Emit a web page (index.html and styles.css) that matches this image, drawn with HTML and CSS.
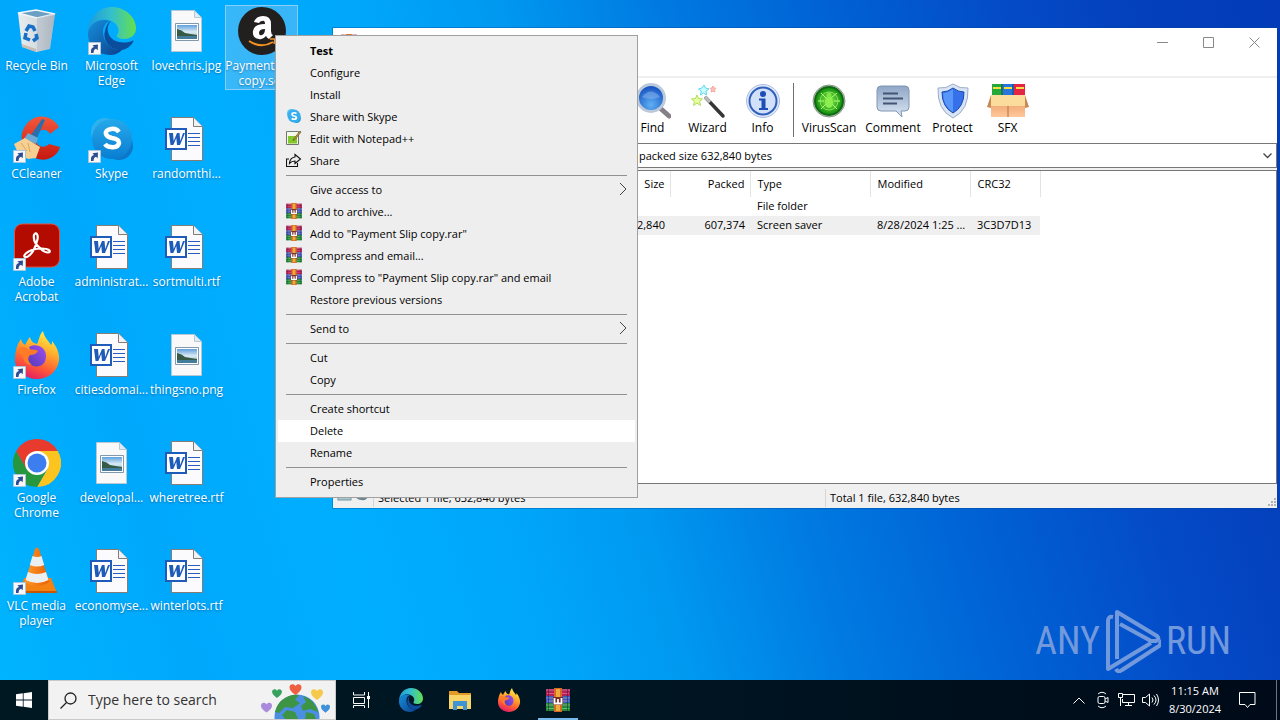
FILE: index.html
```html
<!DOCTYPE html>
<html lang="en">
<head>
<meta charset="utf-8">
<title>Desktop</title>
<link rel="stylesheet" href="styles.css">
</head>
<body>
<svg class="defs" width="0" height="0" aria-hidden="true">
  <defs>
    <linearGradient id="gEdge" x1="0" y1="0" x2="1" y2="0"><stop offset="0" stop-color="#1c9ade"/><stop offset=".5" stop-color="#35c1c8"/><stop offset="1" stop-color="#66e04c"/></linearGradient>
    <linearGradient id="gEdge2" x1="0" y1="0" x2="1" y2="1"><stop offset="0" stop-color="#1690dc"/><stop offset="1" stop-color="#0c3f8c"/></linearGradient>
    <linearGradient id="gBin" x1="0" y1="0" x2="1" y2="0"><stop offset="0" stop-color="#e9edf0"/><stop offset=".6" stop-color="#d3d9de"/><stop offset="1" stop-color="#a3b0bb"/></linearGradient>
    <linearGradient id="gSkype" x1="0" y1="0" x2="0" y2="1"><stop offset="0" stop-color="#25a9ea"/><stop offset="1" stop-color="#0a7ed2"/></linearGradient>
    <linearGradient id="gFox" x1=".7" y1="0" x2=".3" y2="1"><stop offset="0" stop-color="#fff04a"/><stop offset=".35" stop-color="#ffb02c"/><stop offset=".7" stop-color="#ff5a36"/><stop offset="1" stop-color="#e01a6a"/></linearGradient>
    <linearGradient id="gPurple" x1="1" y1="0" x2="0" y2="1"><stop offset="0" stop-color="#a44df0"/><stop offset="1" stop-color="#4b3bb8"/></linearGradient>
    <linearGradient id="gRed" x1="0" y1="0" x2="0" y2="1"><stop offset="0" stop-color="#f4573a"/><stop offset="1" stop-color="#c5180f"/></linearGradient>
    <linearGradient id="gSky" x1="0" y1="0" x2="0" y2="1"><stop offset="0" stop-color="#5f9fdc"/><stop offset=".5" stop-color="#dcecf5"/><stop offset="1" stop-color="#6fa1b9"/></linearGradient>
    <linearGradient id="gCone" x1="0" y1="0" x2="1" y2="0"><stop offset="0" stop-color="#ff9a2a"/><stop offset="1" stop-color="#e85f00"/></linearGradient>
    <radialGradient id="gLens" cx=".5" cy=".75" r=".7"><stop offset="0" stop-color="#5fb0f4"/><stop offset="1" stop-color="#1450c0"/></radialGradient>
    <radialGradient id="gVirus"><stop offset="0" stop-color="#8cf04a"/><stop offset="1" stop-color="#0c8a0c"/></radialGradient>
    <linearGradient id="gSteel" x1="0" y1="0" x2="0" y2="1"><stop offset="0" stop-color="#8fa6c6"/><stop offset="1" stop-color="#dbe7f4"/></linearGradient>
    <linearGradient id="gBox" x1="0" y1="0" x2="0" y2="1"><stop offset="0" stop-color="#e89a60"/><stop offset="1" stop-color="#ffc79a"/></linearGradient>

    <symbol id="shortcut" viewBox="0 0 13 13"><path d="M.5.5h12v12H.5z" fill="#f7f7f9" stroke="#a9c6dc"/><path d="M3 11V8.500Q3.200 5.500 6 5L4.500 3.200 10 2.500 9.700 8.200 8 6.800Q5.500 7.500 5.500 11z" fill="#2c4d91"/></symbol>
    <symbol id="edge" viewBox="0 0 48 48">
      <path d="M0 25C1 10 11 0 24 0s24 10 24 21c0 7-5 11-12 11-5 0-8-2-7-4 3-3 2-11-6-14C13 10 4 15 0 25z" fill="url(#gEdge)"/>
      <path d="M0 25C3 14 14 11 22 14c-4 1-7 5-7 11 0 11 9 19 19 18-3 3-7 5-12 5C9 48-1 38 0 25z" fill="url(#gEdge2)"/>
      <path d="M17 24c-3 10 6 20 17 19 5-1 9-4 11-8 1-1 0-2-1-1-11 4-22 0-24-9-1-4 0-8 3-11-3 1-5 5-6 10z" fill="#0b4c9c"/>
    </symbol>
    <symbol id="fox" viewBox="0 0 48 48">
      <path d="M3 20C4 13 7 10 8 8c1 4 3 5 4 6 2-4 4-7 5-8 1 4 3 6 7 7 2-3 2-9 6-13 1 6 5 9 8 14 1-1 1-2 1-4 5 6 8 13 7 20-2 11-11 18-22 18S2 40 2 29c0-4 0-6 1-9z" fill="url(#gFox)"/>
      <path d="M16 16c6-4 17-1 17 9 0 8-6 12-12 10-6-1-8-6-7-11l5-2z" fill="url(#gPurple)"/>
      <path d="M3 20c4-5 8-5 12-2 4 1 8 0 10 2-2 3-5 4-8 4-3 3-2 7 2 10-5 0-9-4-9-9z" fill="#ff7b27"/>
    </symbol>
    <symbol id="word" viewBox="0 0 40 44">
      <path d="M6.500.5h22l9 9v34h-31z" fill="#fbfbfd" stroke="#857c76"/><path d="M28.500.5v9h9" fill="#eef3fa" stroke="#857c76"/>
      <path d="M23 16.500h12M23 20.500h12M23 24.500h12M23 28.500h12" stroke="#2a5dbd"/>
      <path d="M1 12h20v20H1z" fill="#fff" stroke="#1f5bb8" stroke-width="2"/>
      <path d="M4 16h4l.7 8 3.300-8h2.500l.8 8 2.700-8H20l-5 12h-3l-.7-7-3 7H5.500z" fill="#1f5bb8"/>
    </symbol>
    <symbol id="photo" viewBox="0 0 40 44">
      <path d="M6.500 1.500h23l7 7v34h-30z" fill="#f9f9fa" stroke="#b9c9d4"/><path d="M29.500 1.500v7h7z" fill="#dcebf5" stroke="#b9c9d4"/>
      <path d="M10.500 14.500h23v17h-23z" fill="#fff" stroke="#8199ab"/><path d="M12 16h20v14H12z" fill="url(#gSky)"/>
      <path d="M12 20q5 1 8 4 5 1 12 2v1H12z" fill="#375a46"/><path d="M12 27h20v3H12z" fill="#447c9b"/>
    </symbol>
    <symbol id="rar" viewBox="0 0 24 24">
      <path d="M0 1h24v7H0z" fill="#b32257"/><path d="M0 8h24v7H0z" fill="#4159b8"/><path d="M0 15h24v8H0z" fill="#278a3a"/>
      <path d="M0 2h24M0 10h24M0 17h24" stroke="#fff" stroke-opacity=".35"/>
      <path d="M1 5.500h22" stroke="#e35683"/><path d="M1 13h22" stroke="#8795dc"/><path d="M1 20.500h22" stroke="#52c463"/>
      <path d="M2.500 1v22M21.500 1v22" stroke="#201a44" stroke-opacity=".5"/>
      <path d="M8 0h8v24H8z" fill="#d66a22"/><path d="M10 1h4v22h-4z" fill="#efaa3f"/>
      <path d="M7 9h10v8H7z" fill="#7a2c22"/><path d="M8.500 10v5.500h7V10M12 11v4" fill="none" stroke="#fff" stroke-width="1.800"/>
    </symbol>
    <symbol id="heart" viewBox="0 0 12 11"><path d="M6 11C2 8 0 6 0 3.500 0 0 4-.8 6 2c2-2.800 6-2 6 1.500C12 6 10 8 6 11z"/></symbol>
  </defs>
</svg>

<div class="screen">
  <main class="desktop">
    <div class="icons">
      <button class="item"><svg class="pic" viewBox="0 0 48 48"><path d="M5 6 23 3l19 4-5 35-14 3-14-5z" fill="url(#gBin)"/><path d="M5 6l18-3 19 4-18 4z" fill="#6c9fc4" stroke="#f3f6f8" stroke-width="1.500"/><path d="M24 11v34l13-4 5-34z" fill="#aebac4" opacity=".55"/><path d="M9 37l14 5v3L9 40z" fill="#b5957a" opacity=".5"/><g fill="none" stroke="#1671c6" stroke-width="3.500"><path d="M13 24l3-5 4 1 2 4"/><path d="M23 27l1 4-4 3"/><path d="M17 33l-5-2 1-5"/></g></svg><span>Recycle Bin</span></button>
      <button class="item"><svg class="pic" viewBox="0 0 48 48"><path d="M46 12C38-2 16-4 9 18c-3 15 12 30 26 26 6-2 11-7 12-12L36 29c-5 5-13 3-13-5 1-10 10-12 14-5z" fill="url(#gRed)"/><path d="M29 4l3 1-8 18-6-3z" fill="#2c6eaa"/><path d="M15 18l10 5-2 6-12-5z" fill="#6ba9d5"/><path d="M1 29l11-6 15 9-4 11-8 1-10-6z" fill="#f6cf93"/><path d="M8 28l6 8M15 28l2 9" stroke="#d9a75c"/><use href="#shortcut" y="35" width="13" height="13"/></svg><span>CCleaner</span></button>
      <button class="item"><svg class="pic" viewBox="0 0 48 48"><rect x="1.500" y="1" width="45" height="43" rx="8" fill="#b30b00" stroke="#e7503e"/><path d="M21 12c2-4 5 0 3 6-2 8-6 14-10 16-5 1-3-4 5-7 6-2 14-2 17 0 3 3-3 4-8-1-5-4-8-9-7-14z" fill="none" stroke="#fff" stroke-width="2.200"/><use href="#shortcut" y="35" width="13" height="13"/></svg><span>Adobe<br>Acrobat</span></button>
      <button class="item"><svg class="pic" viewBox="0 0 48 48"><use href="#fox" width="48" height="48"/><use href="#shortcut" y="35" width="13" height="13"/></svg><span>Firefox</span></button>
      <button class="item"><svg class="pic" viewBox="0 0 48 48"><path d="M24 24 3.200 12A24 24 0 0 1 44.800 12z" fill="#e83b2e"/><path d="M24 24V12h20.800A24 24 0 0 1 24 48l10.400-18z" fill="#fcc41f"/><path d="M3.200 12A24 24 0 0 0 24 48l10.400-18L24 24l-10.400 6z" fill="#26963f"/><path d="M3.200 12 13.600 30 24 12z" fill="#e83b2e"/><circle cx="24" cy="24" r="12" fill="#fff"/><circle cx="24" cy="24" r="9.500" fill="#3c7ef0"/><use href="#shortcut" y="35" width="13" height="13"/></svg><span>Google<br>Chrome</span></button>
      <button class="item"><svg class="pic" viewBox="0 0 48 48"><path d="M11 31h27l6 15H7z" fill="#f48212"/><path d="M7 44h37v2H7z" fill="#c95500"/><path d="M22 2q2-3 4 0l10 33q-12 8-24 0z" fill="url(#gCone)"/><path d="M19.500 9q4.500 2 9 0l2.700 9q-7 3-14.400 0zM15 25q9 4 18 0l2.500 8q-11 6-23 0z" fill="#eceff0"/><use href="#shortcut" y="35" width="13" height="13"/></svg><span>VLC media<br>player</span></button>
      <button class="item"><svg class="pic" viewBox="0 0 48 48"><use href="#edge" width="48" height="48"/><use href="#shortcut" y="35" width="13" height="13"/></svg><span>Microsoft<br>Edge</span></button>
      <button class="item"><svg class="pic" viewBox="0 0 48 48"><circle cx="17" cy="17" r="14" fill="#2fb1ee"/><circle cx="31" cy="31" r="14" fill="#0d78c9"/><circle cx="24" cy="24" r="20" fill="url(#gSkype)"/><path d="M31 17q-3-4-8-3-6 1-5 5 1 3 6 4 7 1 7 5-1 5-8 4-4 0-6-3" fill="none" stroke="#fff" stroke-width="4.500"/><use href="#shortcut" y="35" width="13" height="13"/></svg><span>Skype</span></button>
      <button class="item"><svg class="pic doc"><use href="#word"/></svg><span>administrat...</span></button>
      <button class="item"><svg class="pic doc"><use href="#word"/></svg><span>citiesdomai...</span></button>
      <button class="item"><svg class="pic doc"><use href="#photo"/></svg><span>developal...</span></button>
      <button class="item"><svg class="pic doc"><use href="#word"/></svg><span>economyse...</span></button>
      <button class="item"><svg class="pic doc"><use href="#photo"/></svg><span>lovechris.jpg</span></button>
      <button class="item"><svg class="pic doc"><use href="#word"/></svg><span>randomthi...</span></button>
      <button class="item"><svg class="pic doc"><use href="#word"/></svg><span>sortmulti.rtf</span></button>
      <button class="item"><svg class="pic doc"><use href="#photo"/></svg><span>thingsno.png</span></button>
      <button class="item"><svg class="pic doc"><use href="#word"/></svg><span>wheretree.rtf</span></button>
      <button class="item"><svg class="pic doc"><use href="#word"/></svg><span>winterlots.rtf</span></button>
      <button class="item selected"><svg class="pic" viewBox="0 0 48 48"><circle cx="24" cy="24" r="24" fill="#221f1f"/><path d="M16 15q2-6 9-6 8 0 8 8v7q0 3 2 4l-4 4q-2-1-3-3-3 4-7 3-7-1-6-8 1-7 12-7 0-4-3-3-2 0-3 2zm11 7q-6 0-6 4 0 3 3 2 3-1 3-6z" fill="#fff"/><path d="M11 34q12 8 24 1" fill="none" stroke="#f59120" stroke-width="2"/><path d="M32 32l5 0-1 5" fill="none" stroke="#f59120" stroke-width="1.500"/></svg><span>Payment Slip<br>copy.scr</span></button>
    </div>

    <div class="watermark" aria-label="ANY RUN"><span>ANY</span><svg width="56" height="64" viewBox="0 0 56 64" fill="none" stroke="#7399dd" stroke-width="4" stroke-linejoin="round"><path d="M8 8q-5-1-5 4v48L46 34"/><path d="M12 50V3l40 24q3 3-1 5h-5L15 15"/><path d="M11 60q2 4 6 1l37-24q3-3 0-5"/></svg><span>RUN</span></div>

    <section class="window" aria-label="Archive window">
      <header class="titlebar">
        <svg class="appicon"><use href="#rar"/></svg>
        <div class="caption">
          <button aria-label="Minimize"><svg width="11" height="11"><path d="M0 5.500h11"/></svg></button>
          <button aria-label="Maximize"><svg width="11" height="11"><path d="M.5.5h10v10H.5z"/></svg></button>
          <button aria-label="Close"><svg width="11" height="11"><path d="M.5.5l10 10m0-10-10 10"/></svg></button>
        </div>
      </header>
      <div class="toolbar">
        <button class="tool"><svg viewBox="0 0 36 36"><path d="M25 25l9 8" stroke="#858087" stroke-width="5" stroke-linecap="round"/><circle cx="16" cy="15" r="13.500" fill="url(#gLens)" stroke="#bcc9db" stroke-width="3"/><path d="M7 14q9-11 18 0-9 4-18 0z" fill="#8db8ee" opacity=".5"/></svg>Find</button>
        <button class="tool"><svg viewBox="0 0 36 36"><path d="M16 15l17 18" stroke="#353535" stroke-width="3.500" stroke-linecap="round"/><path d="M15 14l5 5" stroke="#bababa" stroke-width="3.500"/><path d="M14 2l1.500 3 3.500 1-3 2 .5 4-3-2-3 2 .8-4-2.800-2 3.500-1z" fill="#c9faff" stroke="#5fd9ea"/><path d="M7 12l1.500 3.500 4 .5-3 2.500 1 4L7 20l-3.500 2.500 1-4-3-2.500 4-.5z" fill="#e8ff9b" stroke="#a9de5b"/><path d="M23 3l1 2 2 .3-1.500 1.500.5 2.200-2-1-2 1 .5-2.200L20 5.300l2-.3z" fill="#ffc1bd" stroke="#f5a5a2"/></svg>Wizard</button>
        <button class="tool"><svg viewBox="0 0 36 36"><circle cx="18" cy="18" r="16.500" fill="#dfe8f8" stroke="#acbfe3"/><circle cx="18" cy="18" r="13.500" fill="#d3e0fa" stroke="#315fbd" stroke-width="2"/><circle cx="18" cy="11" r="3" fill="#1d4db6"/><path d="M14 15.500h6.500V25H23v2H14v-2h2.500v-7.500H14z" fill="#1d4db6"/></svg>Info</button>
        <span class="rule"></span>
        <button class="tool wide"><svg viewBox="0 0 36 36"><circle cx="18" cy="18" r="16" fill="#c7d2c7" stroke="#899489"/><circle cx="18" cy="18" r="14" fill="url(#gVirus)" stroke="#126815" stroke-width="2"/><g fill="none" stroke="#b6ff80"><circle cx="18" cy="18" r="9" stroke-opacity=".6"/><path d="M7 18h6m10 0h6M10 10l6 6m4-1 6-5M10 26l5-5m6 0 5 5"/></g><ellipse cx="18" cy="19" rx="4" ry="6" fill="#8cee4f"/><circle cx="18" cy="12" r="2.500" fill="#7fe645"/></svg>VirusScan</button>
        <button class="tool wide"><svg viewBox="0 0 36 36"><path d="M6 3h24q4 0 4 4v17q0 4-4 4h-4l1 6-6-6H6q-4 0-4-4V7q0-4 4-4z" fill="url(#gSteel)" stroke="#8294b4"/><path d="M8 10.500h15M8 15.500h20M8 20.500h14" stroke="#445474" stroke-width="2"/></svg>Comment</button>
        <button class="tool"><svg viewBox="0 0 36 36"><path d="M18 1q7 5 15 4 1 22-15 30Q2 27 3 5q8 1 15-4z" fill="#d9e4f4" stroke="#9badc8"/><path d="M18 5q5 4 11 4 0 15-11 21Q7 24 7 9q6 0 11-4z" fill="#3670ea" stroke="#1948ae"/><path d="M18 6v23Q8 23 8 10q5 0 10-4z" fill="#5797fa"/></svg>Protect</button>
        <button class="tool"><svg class="sfx" viewBox="0 0 42 36"><path d="M5 1h11v16H5z" fill="#24a939"/><path d="M16 1h11v16H16z" fill="#2775dd"/><path d="M27 1h11v16H27z" fill="#e52443"/><path d="M6 5h8M17 5h8M29 5h8" stroke="#f4df45" stroke-width="2"/><path d="M15 1v15M26 1v15" stroke="#164277"/><path d="M4 14h34v20H4z" fill="url(#gBox)"/><path d="M4 12h34l2 11H2z" fill="#fbdc9c"/><path d="M4 12 0 24l4 1zM38 12l4 12-4 1z" fill="#c78955"/><path d="M21 23v11" stroke="#b77143"/></svg>SFX</button>
      </div>
      <select class="address" aria-label="Archive path"><option>packed size 632,840 bytes</option></select>
      <div class="files">
        <table>
          <colgroup><col class="c-name"><col class="c-size"><col class="c-packed"><col class="c-type"><col class="c-mod"><col class="c-crc"></colgroup>
          <thead><tr><th></th><th class="num">Size</th><th class="num">Packed</th><th>Type</th><th>Modified</th><th>CRC32</th></tr></thead>
          <tbody>
            <tr><td></td><td></td><td></td><td>File folder</td><td></td><td></td></tr>
            <tr class="current"><td></td><td class="num">632,840</td><td class="num">607,374</td><td>Screen saver</td><td>8/28/2024 1:25 ...</td><td>3C3D7D13</td></tr>
          </tbody>
        </table>
      </div>
      <footer class="status">
        <span class="led"><svg width="36" height="14"><rect x="1" y="3" width="13" height="8" fill="#a9c9d2" stroke="#7396a0"/><path d="M17 7q5-5 14 0-1 5-7 4-3 0-7-4z" fill="#6d8791"/></svg></span>
        <span class="cell">Selected 1 file, 632,840 bytes</span>
        <span class="cell">Total 1 file, 632,840 bytes</span>
        <svg class="grip" width="9" height="9" fill="#b2b2b2"><path d="M7 0h2v2H7zM4 3h2v2H4zM7 3h2v2H7zM1 6h2v2H1zM4 6h2v2H4zM7 6h2v2H7z"/></svg>
      </footer>
    </section>

    <div class="menu" role="menu">
      <button role="menuitem"><i></i><b>Test</b></button>
      <button role="menuitem"><i></i>Configure</button>
      <button role="menuitem"><i></i>Install</button>
      <button role="menuitem"><svg viewBox="0 0 16 16"><circle cx="5.500" cy="5.500" r="4.500" fill="#4cc0f4"/><circle cx="10.500" cy="10.500" r="4.500" fill="#2b9fe0"/><circle cx="8" cy="8" r="6.500" fill="#38aeee"/><path d="M10.500 5.500Q8 4 6.200 5.500q-.8 2 1.800 2.500 3 .5 2.200 2.500-2 1.500-4.500 0" fill="none" stroke="#fff" stroke-width="1.700"/></svg>Share with Skype</button>
      <button role="menuitem"><svg viewBox="0 0 16 16"><path d="M.5 1.500h12v13H.5z" fill="#f5f8e6" stroke="#70756d"/><path d="M2 6h9v7.500H2z" fill="#82c92e"/><path d="M1 1.500h11" stroke="#68838d" stroke-dasharray="1 1"/><path d="M14 1 8 8.500l-1 2 2-1L15 2z" fill="#d0a13d" stroke="#694d24" stroke-width=".7"/></svg>Edit with Notepad++</button>
      <button role="menuitem"><svg viewBox="0 0 16 16" fill="none" stroke="#111" stroke-width="1.100"><path d="M3 7H.5v7.500h11V11"/><path d="M9 2.500 14.500 7 9 11.500V9q-3.500 0-5.500 2.500Q4 5.500 9 5z"/></svg>Share</button>
      <hr>
      <button role="menuitem"><i></i>Give access to<svg class="more" viewBox="0 0 8 14"><path d="M1 1l6 6-6 6"/></svg></button>
      <button role="menuitem"><svg><use href="#rar"/></svg>Add to archive...</button>
      <button role="menuitem"><svg><use href="#rar"/></svg>Add to "Payment Slip copy.rar"</button>
      <button role="menuitem"><svg><use href="#rar"/></svg>Compress and email...</button>
      <button role="menuitem"><svg><use href="#rar"/></svg>Compress to "Payment Slip copy.rar" and email</button>
      <button role="menuitem"><i></i>Restore previous versions</button>
      <hr>
      <button role="menuitem"><i></i>Send to<svg class="more" viewBox="0 0 8 14"><path d="M1 1l6 6-6 6"/></svg></button>
      <hr>
      <button role="menuitem"><i></i>Cut</button>
      <button role="menuitem"><i></i>Copy</button>
      <hr>
      <button role="menuitem"><i></i>Create shortcut</button>
      <button role="menuitem" class="hot"><i></i>Delete</button>
      <button role="menuitem"><i></i>Rename</button>
      <hr>
      <button role="menuitem"><i></i>Properties</button>
    </div>
  </main>

  <footer class="taskbar">
    <button class="start" aria-label="Start"><svg width="16" height="16" fill="#fff"><path d="M0 2.200 6.800 1.300v6.300H0zM7.600 1.200 16 0v7.600H7.600zM0 8.400h6.800v6.300L0 13.800zM7.600 8.400H16V16l-8.400-1.200z"/></svg></button>
    <label class="search">
      <svg width="17" height="17" fill="none" stroke="#222" stroke-width="1.300"><circle cx="10.500" cy="6.500" r="5.500"/><path d="M6.500 10.500.5 16.500"/></svg>
      <input type="text" placeholder="Type here to search" aria-label="Search">
      <svg class="globe" width="70" height="38" viewBox="0 0 70 38"><circle cx="36" cy="36" r="22.500" fill="#4a8fe3"/><path d="M21 19q8-6 17-5l-4 5 5 3-7 5-8-1-6 6-4-1q2-8 7-12zM42 15q12 4 15 16l-8-3-7 2-2-5 5-4zM26 29l8 2 3 7H24l-3-4zM45 31l8 2 2 5H44z" fill="#3c9444"/><use href="#heart" x="28" y="3" width="13" height="11" fill="#ee5e43"/><use href="#heart" x="11" y="8" width="10" height="9" fill="#39a15e"/><use href="#heart" x="50" y="8" width="12" height="11" fill="#f5ca4a"/><use href="#heart" x="0" y="21" width="11" height="11" fill="#a98add"/><use href="#heart" x="60" y="23" width="9" height="9" fill="#3e92da"/></svg>
    </label>
    <nav class="apps">
      <button aria-label="Task view"><svg width="17" height="16" fill="none" stroke="#fff"><path d="M.5 0v3h11V0M.5 5.500h11v6H.5zM.5 16v-2.500h11V16M15.500 0v16"/><path d="M14 4h3v3h-3z" fill="#fff" stroke="none"/></svg></button>
      <button aria-label="Edge"><svg width="24" height="24"><use href="#edge"/></svg></button>
      <button aria-label="File Explorer"><svg width="24" height="24"><path d="M1 3h8l2 2h12v5H1z" fill="#e49b25"/><path d="M1 7h22v14H1z" fill="#fbd468"/><path d="M5 13h14v9h-4v-4H9v4H5z" fill="#3f95d2"/></svg></button>
      <button aria-label="Firefox"><svg width="24" height="24"><use href="#fox"/></svg></button>
      <button aria-label="WinRAR" class="running"><svg width="24" height="24"><use href="#rar"/></svg></button>
    </nav>
    <div class="tray">
      <button aria-label="Hidden icons"><svg width="12" height="7"><path d="M.5 6.500 6 1l5.500 5.500"/></svg></button>
      <button aria-label="Meet now"><svg width="14" height="18"><rect x="2" y="5.500" width="7" height="7" rx="1.500"/><path d="M9 8l3-1.500v5L9 10M2 3q4-3.500 8 0M2 15q4 3.500 8 0"/></svg></button>
      <button aria-label="Network"><svg width="18" height="14"><path d="M5 1.500h11.500v8H4.500V6M7 12.500h7M10.500 9.500v3M.5.5h4v4h-4zM2.500 5v8"/></svg></button>
      <button aria-label="Volume"><svg width="18" height="14"><path d="M.5 4.500h3l4-3.500v12l-4-3.500h-3zM10 4.500q2 2.500 0 5M12 2.500q4 4.500 0 9M14.500 1q4 6 0 12"/></svg></button>
      <time class="clock">11:15 AM<br>8/30/2024</time>
      <button class="notes" aria-label="Notifications"><svg width="17" height="17"><path d="M.5.5h15.500v12h-5l-2.500 3-2.500-3H.5z"/></svg></button>
    </div>
  </footer>
</div>
</body>
</html>
```
FILE: styles.css
```css
* { box-sizing: border-box; }
html, body { height: 100%; margin: 0; }
body { font: 12px/15px "Open Sans", "Noto Sans", sans-serif; color: #000; overflow: hidden; }
button { padding: 0; border: 0; background: none; font: inherit; color: inherit; }
.defs { position: absolute; }
.screen { display: flex; flex-direction: column; height: 100vh; }

.desktop {
  position: relative;
  flex: 1;
  min-height: 0;
  background: linear-gradient(74deg, #00b4ff 0%, #00a8fc 13%, #00aeff 26%, #00a6fa 38%, #0098f0 47%, #007ce2 57%, #0060d4 70%, #044bc8 81%, #0440bc 90%, #033bb8 100%);
}
.icons {
  display: grid;
  grid-auto-flow: column;
  grid-template-rows: repeat(6, 108px);
  grid-auto-columns: 75px;
  align-items: start;
  justify-content: start;
  height: 100%;
  padding-top: 5px;
}
.item {
  display: flex;
  flex-direction: column;
  align-items: center;
  gap: 3px;
  height: 85px;
  margin: 0 2px 0 0;
  padding-top: 1px;
  border: 1px solid transparent;
  color: #fff;
  white-space: nowrap;
  text-shadow: 0 1px 2px rgba(0, 50, 100, .5);
}
.item.selected { background: rgba(140, 200, 240, .4); border-color: rgba(170, 215, 245, .7); }
.pic { flex: none; width: 48px; height: 48px; }
.doc { padding: 2px 6px 2px 2px; }

.watermark {
  position: absolute;
  right: 49px;
  bottom: 7px;
  display: flex;
  align-items: center;
  gap: 5px;
  color: #7399dd;
  font: 400 38px/64px "Roboto Condensed", "Liberation Sans Narrow", "Open Sans Condensed", Roboto, sans-serif;
}

.window {
  position: absolute;
  left: 333px;
  right: 3px;
  top: 28px;
  bottom: 172px;
  display: flex;
  flex-direction: column;
  background: #f0f0f0;
  box-shadow: 0 0 0 1px rgba(0, 70, 140, .35);
}
.titlebar {
  display: flex;
  justify-content: space-between;
  height: 50px;
  padding-left: 8px;
  border-bottom: 2px solid #efefef;
  background: #fff;
}
.appicon { width: 16px; height: 16px; margin-top: 6px; }
.caption { display: flex; height: 29px; }
.caption button { display: grid; place-items: center; width: 46px; }
.caption svg { fill: none; stroke: #888; }
.toolbar { display: flex; height: 65px; padding: 5px 0 6px 292px; background: #fff; }
.tool { display: flex; flex-direction: column; align-items: center; width: 55px; gap: 1px; }
.tool.wide { width: 64px; }
.tool svg { width: 36px; height: 36px; }
.tool .sfx { width: 42px; }
.rule { width: 1px; margin: 0 3px; background: #707070; }
.address {
  appearance: none;
  flex: none;
  height: 25px;
  padding: 0 20px 1px 305px;
  border: 1px solid #777;
  border-radius: 0;
  color: #000;
  font: inherit;
  font-size: 11px;
  background: #fff url("data:image/svg+xml,%3Csvg xmlns='http://www.w3.org/2000/svg' width='9' height='6'%3E%3Cpath d='M.5.5l4 4 4-4' fill='none' stroke='%23444' stroke-width='1.300'/%3E%3C/svg%3E") no-repeat right 4px center;
}
.files { flex: 1; margin-top: 2px; border: 1px solid #777; background: #fff; }
table { table-layout: fixed; width: 706px; border-collapse: collapse; font-size: 11px; }
.c-name { width: 236px; }
.c-size { width: 100px; }
.c-packed { width: 80px; }
.c-type { width: 120px; }
.c-mod { width: 100px; }
.c-crc { width: 70px; }
th { height: 26px; border-right: 1px solid #e3e3e3; text-align: left; font-weight: 400; }
th, td { padding: 0 5px 2px 7px; white-space: nowrap; }
td { height: 19px; }
.num { text-align: right; }
.current { background: #efefef; }
.status { position: relative; display: flex; align-items: center; height: 24px; padding-top: 3px; font-size: 11px; }
.led { width: 41px; height: 18px; padding-left: 4px; border-right: 1px solid #d5d5d5; }
.cell { flex: 1; height: 18px; padding-left: 4px; line-height: 18px; }
.cell + .cell { border-left: 1px solid #d5d5d5; }
.grip { position: absolute; right: 1px; bottom: 1px; }

.menu {
  position: absolute;
  left: 275px;
  top: 35px;
  width: 363px;
  padding: 4px 2px;
  border: 1px solid #a0a0a0;
  background: #eee;
  font-size: 11px;
}
.menu button { display: flex; align-items: center; width: 100%; height: 22px; padding: 0 8px 2px; gap: 8px; white-space: nowrap; }
.menu button > i, .menu svg { flex: none; width: 16px; height: 16px; }
.menu .hot { background: #fff; }
.menu hr { height: 1px; margin: 3px 8px; border: 0; background: #919191; }
.menu .more { width: 8px; height: 14px; margin-left: auto; fill: none; stroke: #444; }

.taskbar { display: flex; height: 40px; background: linear-gradient(90deg, #001822, #001522 50%, #000a18); color: #fff; }
.start { display: grid; place-items: center; width: 48px; }
.search { display: flex; align-items: center; width: 288px; padding: 0 4px 0 11px; gap: 11px; background: #f2f2f2; border: 1px solid #c9c9c9; }
.search svg { flex: none; }
.search input { flex: 1; min-width: 0; padding: 0; border: 0; background: none; font: 14px/20px "Open Sans", "Noto Sans", sans-serif; outline: 0; }
.search input::placeholder { color: #333; opacity: 1; }
.search .globe { align-self: flex-end; }
.apps { display: flex; padding-left: 1px; }
.apps button { display: grid; place-items: center; width: 49px; }
.running { background: linear-gradient(#76b9ed, #76b9ed) no-repeat center bottom / 40px 2px; }
.tray { display: flex; align-items: stretch; margin-left: auto; padding-right: 3px; }
.tray button { display: grid; place-items: center; width: 24px; }
.tray svg { fill: none; stroke: #fff; }
.clock { width: 64px; padding-top: 2px; font-size: 11px; line-height: 18px; text-align: center; }
.tray .notes { width: 50px; padding-right: 8px; border-right: 1px solid #6c737b; }
```
